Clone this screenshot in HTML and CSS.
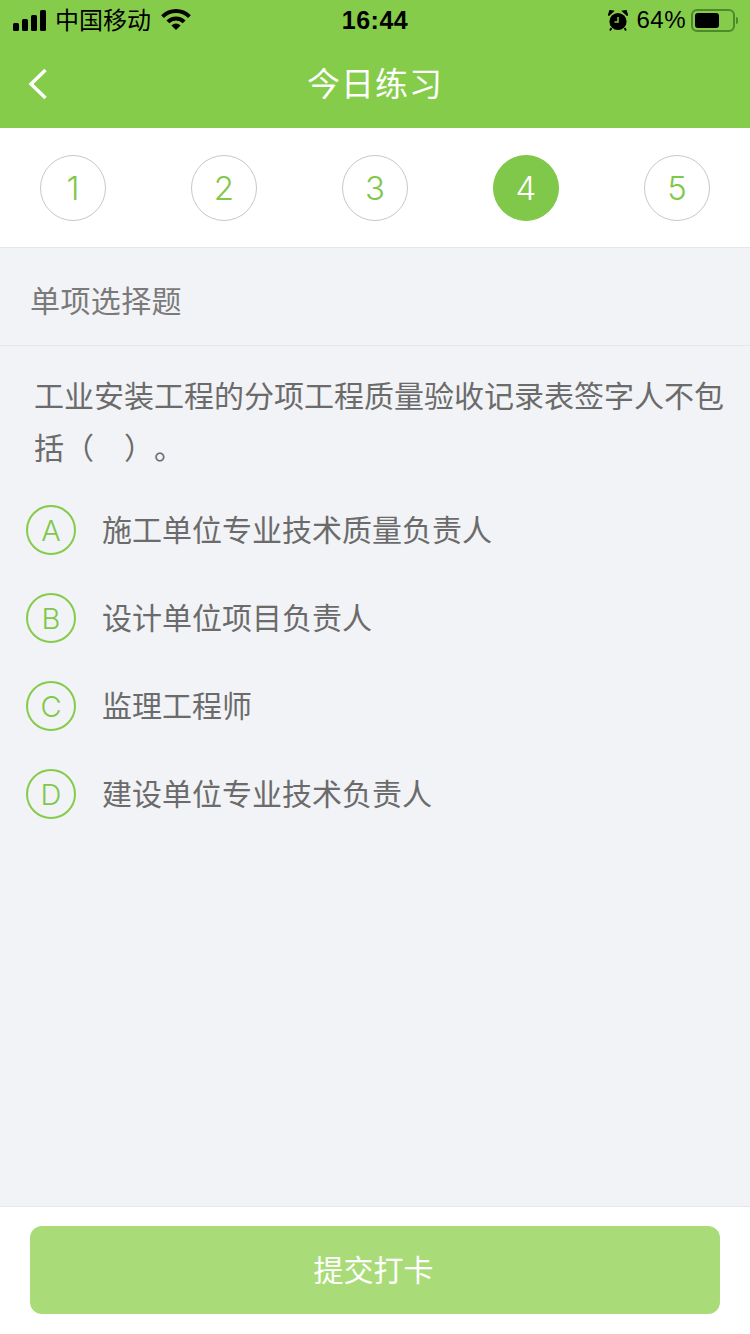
FILE: index.html
```html
<!DOCTYPE html>
<html lang="zh-CN">
<head>
  <meta charset="UTF-8">
  <meta name="viewport" content="width=device-width, initial-scale=1.0">
  <title>今日练习</title>
  <link rel="stylesheet" href="styles.css">
</head>
<body>
  <div class="page">
    <div class="header">
      <!-- Status bar -->
      <div class="status">
        <div class="status-left">
          <svg class="signal" width="33" height="21" viewBox="0 0 33 21">
            <rect x="0" y="13" width="6" height="8" rx="1.5"/>
            <rect x="9" y="9" width="6" height="12" rx="1.5"/>
            <rect x="18" y="5" width="6" height="16" rx="1.5"/>
            <rect x="27" y="0" width="6" height="21" rx="1.5"/>
          </svg>
          <span class="carrier">中国移动</span>
          <svg class="wifi" width="30" height="22" viewBox="0 0 30 22">
            <path d="M1.57 7.57 A19 19 0 0 1 28.43 7.57" fill="none" stroke="#000" stroke-width="4"/>
            <path d="M6.87 12.87 A11.5 11.5 0 0 1 23.13 12.87" fill="none" stroke="#000" stroke-width="4"/>
            <path d="M10.4 16.4 A6.5 6.5 0 0 1 19.6 16.4 L15 21 Z"/>
          </svg>
        </div>
        <div class="status-time">16:44</div>
        <div class="status-right">
          <svg class="alarm" width="20" height="21" viewBox="0 0 20 21">
            <circle cx="10" cy="11.5" r="8.6"/>
            <path d="M0.5 5.5 L5 1.2 L2 0.8 Z M19.5 5.5 L15 1.2 L18 0.8 Z" stroke="#000" stroke-width="1.6"/>
            <path d="M3.5 18 L2 20.5 M16.5 18 L18 20.5" stroke="#000" stroke-width="1.8"/>
            <path d="M10 7 V12 H6.5" fill="none" stroke="#86cc4b" stroke-width="1.5"/>
          </svg>
          <span class="percent">64%</span>
          <div class="battery"><div class="battery-fill"></div></div>
          <div class="battery-tip"></div>
        </div>
      </div>
      <!-- Nav bar -->
      <div class="nav">
        <svg class="back" width="20" height="32" viewBox="0 0 20 32">
          <path d="M17.5 2 L3 16 L17.5 30" fill="none" stroke="#fff" stroke-width="3.4"/>
        </svg>
        <h1 class="nav-title">今日练习</h1>
      </div>
    </div>

    <div class="steps">
      <div class="step">1</div>
      <div class="step">2</div>
      <div class="step">3</div>
      <div class="step active">4</div>
      <div class="step">5</div>
    </div>

    <div class="main">
      <div class="type">单项选择题</div>
      <div class="question">工业安装工程的分项工程质量验收记录表签字人不包括（&ensp;&ensp;）。</div>
      <div class="options">
        <div class="option"><div class="letter">A</div><div class="option-text">施工单位专业技术质量负责人</div></div>
        <div class="option"><div class="letter">B</div><div class="option-text">设计单位项目负责人</div></div>
        <div class="option"><div class="letter">C</div><div class="option-text">监理工程师</div></div>
        <div class="option"><div class="letter">D</div><div class="option-text">建设单位专业技术负责人</div></div>
      </div>
    </div>

    <div class="footer">
      <button class="submit" type="button">提交打卡</button>
    </div>
  </div>
</body>
</html>
```

FILE: styles.css
```css
* {
  box-sizing: border-box;
}

body {
  margin: 0;
  padding: 0;
  font-family: "Liberation Sans", "Noto Sans CJK SC", sans-serif;
  background-color: #f2f3f6;
}

.page {
  width: 750px;
  height: 1334px;
  display: flex;
  flex-direction: column;
  overflow: hidden;
}

.header {
  height: 128px;
  background-color: #86cc4b;
  flex-shrink: 0;
}

.status {
  height: 40px;
  display: flex;
  justify-content: space-between;
  align-items: center;
  position: relative;
  padding: 0 12px 0 13px;
  color: #000;
}

.status-left,
.status-right {
  display: flex;
  align-items: center;
}

.carrier {
  font-size: 24px;
  margin-left: 9px;
  padding-bottom: 3px;
}

.wifi {
  margin-left: 10px;
}

.status-time {
  position: absolute;
  left: 0;
  right: 0;
  text-align: center;
  font-size: 25px;
  font-weight: bold;
  letter-spacing: 0.5px;
}

.alarm {
  margin-right: 8px;
}

.percent {
  font-size: 24px;
  letter-spacing: 0.5px;
  margin-right: 5px;
}

.battery {
  width: 44px;
  height: 23px;
  border: 2px solid #4d8a2b;
  border-radius: 6px;
  padding: 2px;
}

.battery-fill {
  width: 24px;
  height: 15px;
  background-color: #000;
  border-radius: 3px;
}

.battery-tip {
  width: 2px;
  height: 7px;
  margin-left: 1px;
  background-color: #4d8a2b;
  border-radius: 0 2px 2px 0;
}

.nav {
  height: 88px;
  display: flex;
  align-items: center;
  justify-content: center;
  padding-bottom: 4px;
  position: relative;
}

.back {
  position: absolute;
  left: 28px;
  top: 28px;
}

.nav-title {
  margin: 0;
  font-size: 33px;
  font-weight: normal;
  color: #fff;
  letter-spacing: 1px;
}

.steps {
  height: 120px;
  flex-shrink: 0;
  background-color: #fff;
  border-bottom: 1px solid #e6e6e6;
  display: flex;
  justify-content: space-between;
  align-items: center;
  padding: 0 40px;
}

.step {
  width: 66px;
  height: 66px;
  border: 1px solid #c8c8c8;
  border-radius: 50%;
  display: flex;
  align-items: center;
  justify-content: center;
  font-family: Inter, "Liberation Sans", sans-serif;
  font-size: 33px;
  font-weight: 350;
  color: #7fc84a;
}

.step.active {
  background-color: #7fc84a;
  border-color: #7fc84a;
  color: #fff;
}

.main {
  flex: 1;
}

.type {
  height: 98px;
  padding: 5px 30px 0;
  display: flex;
  align-items: center;
  border-bottom: 1px solid #e6e7ea;
  font-size: 30px;
  letter-spacing: 0.4px;
  color: #7a7a7a;
}

.question {
  padding: 25px 20px 0 34px;
  font-size: 30px;
  line-height: 52px;
  text-spacing-trim: space-all;
  color: #6b6b6b;
}

.options {
  padding: 11px 0 0 26px;
}

.option {
  height: 88px;
  display: flex;
  align-items: center;
}

.letter {
  width: 50px;
  height: 50px;
  border: 2px solid #86cc4b;
  border-radius: 50%;
  display: flex;
  align-items: center;
  justify-content: center;
  padding-top: 1px;
  font-family: Inter, "Liberation Sans", sans-serif;
  font-size: 29px;
  font-weight: 350;
  color: #7fc84a;
}

.option-text {
  margin-left: 26px;
  padding-bottom: 4px;
  font-size: 30px;
  color: #6b6b6b;
}

.footer {
  height: 128px;
  flex-shrink: 0;
  background-color: #fff;
  border-top: 1px solid #e6e7ea;
  padding: 19px 30px 0;
}

.submit {
  display: block;
  width: 100%;
  height: 88px;
  padding: 0 3px 4px 0;
  background-color: #a9dc78;
  color: #fff;
  border: none;
  border-radius: 12px;
  font-family: inherit;
  font-size: 30px;
}
```
